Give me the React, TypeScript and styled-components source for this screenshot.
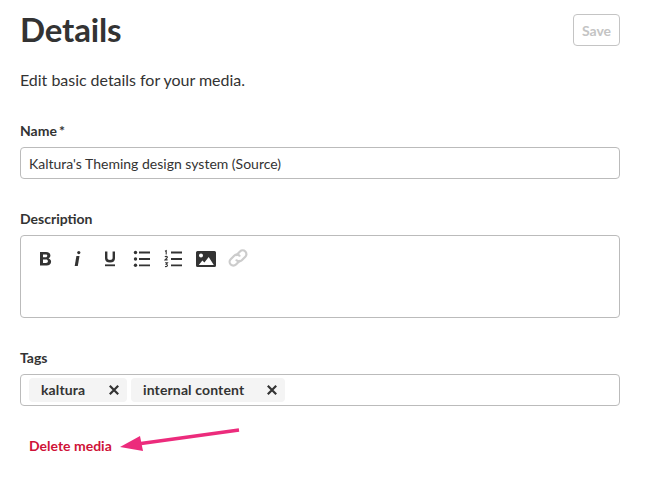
import React from 'react';
import styled, { createGlobalStyle } from 'styled-components';

const GlobalStyle = createGlobalStyle`
  html, body {
    margin: 0;
    padding: 0;
    background: #fff;
    font-family: Lato, "Liberation Sans", sans-serif;
    color: #333;
  }
`;

const Page = styled.div`
  width: 600px;
  height: 487px;
  padding: 0 49px 0 20px;
  position: relative;
`;

const Header = styled.div`
  display: flex;
  justify-content: space-between;
  align-items: flex-start;
  height: 71px;
  padding-top: 14px;
  box-sizing: border-box;
`;

const Title = styled.h1`
  margin: 0;
  font-size: 33px;
  letter-spacing: -0.15px;
  line-height: 31px;
  font-weight: 700;
  color: #333;
`;

const SaveButton = styled.button`
  width: 47px;
  height: 32px;
  padding: 0;
  border: 1px solid #c4c4c4;
  border-radius: 4px;
  background: #fff;
  color: #c4c4c4;
  font-family: inherit;
  font-size: 14px;
  font-weight: 700;
`;

const Intro = styled.p`
  margin: 0 0 33px;
  font-size: 16px;
  letter-spacing: -0.03px;
  line-height: 18px;
  color: #333;
`;

const Field = styled.div<{ $gap: number }>`
  margin-bottom: ${({ $gap }) => $gap}px;
`;

const Label = styled.label`
  display: block;
  margin-bottom: 8px;
  font-size: 14px;
  line-height: 17px;
  font-weight: 700;
  color: #333;
`;

const Required = styled.span`
  margin-left: 2px;
`;

const TextInput = styled.div`
  display: flex;
  align-items: center;
  box-sizing: border-box;
  height: 32px;
  padding: 0 8px;
  border: 1px solid #bbb;
  border-radius: 4px;
  font-size: 14px;
  color: #333;
`;

const Editor = styled.div`
  box-sizing: border-box;
  height: 83px;
  border: 1px solid #bbb;
  border-radius: 4px;
`;

const Toolbar = styled.div`
  display: flex;
  align-items: center;
  gap: 10px;
  padding: 11px 0 0 13px;
`;

const ToolIcon = styled.svg<{ $muted?: boolean }>`
  display: block;
  width: 22px;
  height: 22px;
  color: ${({ $muted }) => ($muted ? '#ccc' : '#333')};
`;

const TagsBox = styled.div`
  display: flex;
  align-items: center;
  gap: 4px;
  box-sizing: border-box;
  height: 32px;
  padding: 0 8px;
  border: 1px solid #bbb;
  border-radius: 4px;
`;

const Tag = styled.div<{ $width: number }>`
  display: flex;
  align-items: center;
  justify-content: space-between;
  box-sizing: border-box;
  width: ${({ $width }) => $width}px;
  height: 24px;
  padding: 0 8px 0 12px;
  border-radius: 4px;
  background: #f4f4f4;
  font-size: 14px;
  letter-spacing: 0.13px;
  font-weight: 700;
  color: #333;
`;

const TagText = styled.span`
  margin-bottom: 2px;
`;

const CloseIcon = styled.svg`
  display: block;
  width: 10px;
  height: 10px;
`;

const DeleteLink = styled.a`
  display: inline-block;
  margin-left: 9px;
  font-size: 14px;
  line-height: 17px;
  font-weight: 700;
  color: #cf1238;
`;

const Arrow = styled.svg`
  position: absolute;
  left: 115px;
  top: 425px;
  width: 130px;
  height: 30px;
`;

const Close = () => (
  <CloseIcon viewBox="0 0 10 10">
    <path d="M.8.8l8.400 8.400M9.200.8L.8 9.200" stroke="#333" strokeWidth="2.200" fill="none" />
  </CloseIcon>
);

export default function App() {
  return (
    <Page>
      <GlobalStyle />
      <Header>
        <Title>Details</Title>
        <SaveButton disabled>Save</SaveButton>
      </Header>
      <Intro>Edit basic details for your media.</Intro>

      <Field $gap={31}>
        <Label>Name<Required>*</Required></Label>
        <TextInput>Kaltura's Theming design system (Source)</TextInput>
      </Field>

      <Field $gap={31}>
        <Label>Description</Label>
        <Editor>
          <Toolbar>
            {/* bold */}
            <ToolIcon viewBox="0 0 22 22">
              <path
                fill="currentColor"
                fillRule="evenodd"
                d="M6 5h6c2.800 0 4.400 1.300 4.400 3.500 0 1.400-.8 2.400-1.900 2.900 1.600.4 2.600 1.600 2.600 3.300 0 2.300-1.800 3.800-4.500 3.800H6V5zm3 2.400v2.900h2.600c1.100 0 1.700-.6 1.700-1.500s-.6-1.400-1.700-1.400H9zm0 5.200v3.300h3c1.200 0 1.900-.6 1.900-1.700s-.7-1.600-1.900-1.600H9z"
              />
            </ToolIcon>
            {/* italic */}
            <ToolIcon viewBox="0 0 22 22">
              <circle cx="12.800" cy="5.600" r="1.600" fill="currentColor" />
              <path fill="currentColor" d="M10.400 9h3.100l-1.700 10H8.700z" />
            </ToolIcon>
            {/* underline */}
            <ToolIcon viewBox="0 0 22 22">
              <path
                d="M8.200 4.500v6.800c0 2 1.500 3 3.800 3s3.800-1 3.800-3V4.500"
                stroke="currentColor"
                strokeWidth="2.400"
                fill="none"
              />
              <rect x="7" y="17.400" width="10" height="1.800" fill="currentColor" />
            </ToolIcon>
            {/* bullet list */}
            <ToolIcon viewBox="0 0 22 22">
              <circle cx="5.500" cy="5.500" r="1.700" fill="currentColor" />
              <circle cx="5.500" cy="12" r="1.700" fill="currentColor" />
              <circle cx="5.500" cy="18.300" r="1.700" fill="currentColor" />
              <path d="M9 5.500h11M9 12h11M9 18.300h11" stroke="currentColor" strokeWidth="1.800" />
            </ToolIcon>
            {/* numbered list */}
            <ToolIcon viewBox="0 0 22 22">
              <path d="M9 5.500h11M9 12h11M9 18.300h11" stroke="currentColor" strokeWidth="1.800" />
              <path
                d="M4.200 7.500V3.600l-1.200.6M3 9.900c.4-.8 2.400-.8 2.400.4 0 .9-1.600 1.400-2.400 2.600h2.600M3.100 15.800h2.300l-1.200 1.500c1.800 0 1.800 2.800-1.200 2.200"
                stroke="currentColor"
                strokeWidth="1.100"
                fill="none"
              />
            </ToolIcon>
            {/* image */}
            <ToolIcon viewBox="0 0 22 22">
              <path
                fill="currentColor"
                fillRule="evenodd"
                d="M3.500 4h17A1.500 1.500 0 0 1 22 5.500v13a1.500 1.500 0 0 1-1.500 1.500h-17A1.500 1.500 0 0 1 2 18.500v-13A1.500 1.500 0 0 1 3.500 4zM7 6.500a2 2 0 1 0 0 4 2 2 0 0 0 0-4zM14.700 10l-4.300 5.500-2-2L4.800 18h15z"
              />
            </ToolIcon>
            {/* link */}
            <ToolIcon $muted viewBox="0 0 22 22">
              <g stroke="currentColor" strokeWidth="2.200" fill="none" strokeLinecap="round" transform="translate(1 0)">
                <path d="M9.500 8l3.500-3.500a3.700 3.700 0 0 1 5.300 5.300l-3.500 3.500a3.700 3.700 0 0 1-5.300 0" />
                <path d="M12.500 14l-3.500 3.500a3.700 3.700 0 0 1-5.300-5.300l3.500-3.500a3.700 3.700 0 0 1 5.300 0" />
              </g>
            </ToolIcon>
          </Toolbar>
        </Editor>
      </Field>

      <Field $gap={29}>
        <Label>Tags</Label>
        <TagsBox>
          <Tag $width={98}><TagText>kaltura</TagText><Close /></Tag>
          <Tag $width={154}><TagText>internal content</TagText><Close /></Tag>
        </TagsBox>
      </Field>

      <DeleteLink>Delete media</DeleteLink>

      <Arrow viewBox="0 0 130 30">
        <path d="M124 5L26 18.500" stroke="#ec2b7c" strokeWidth="3.600" fill="none" />
        <path d="M5 22L25 11 28 26z" fill="#ec2b7c" />
      </Arrow>
    </Page>
  );
}
